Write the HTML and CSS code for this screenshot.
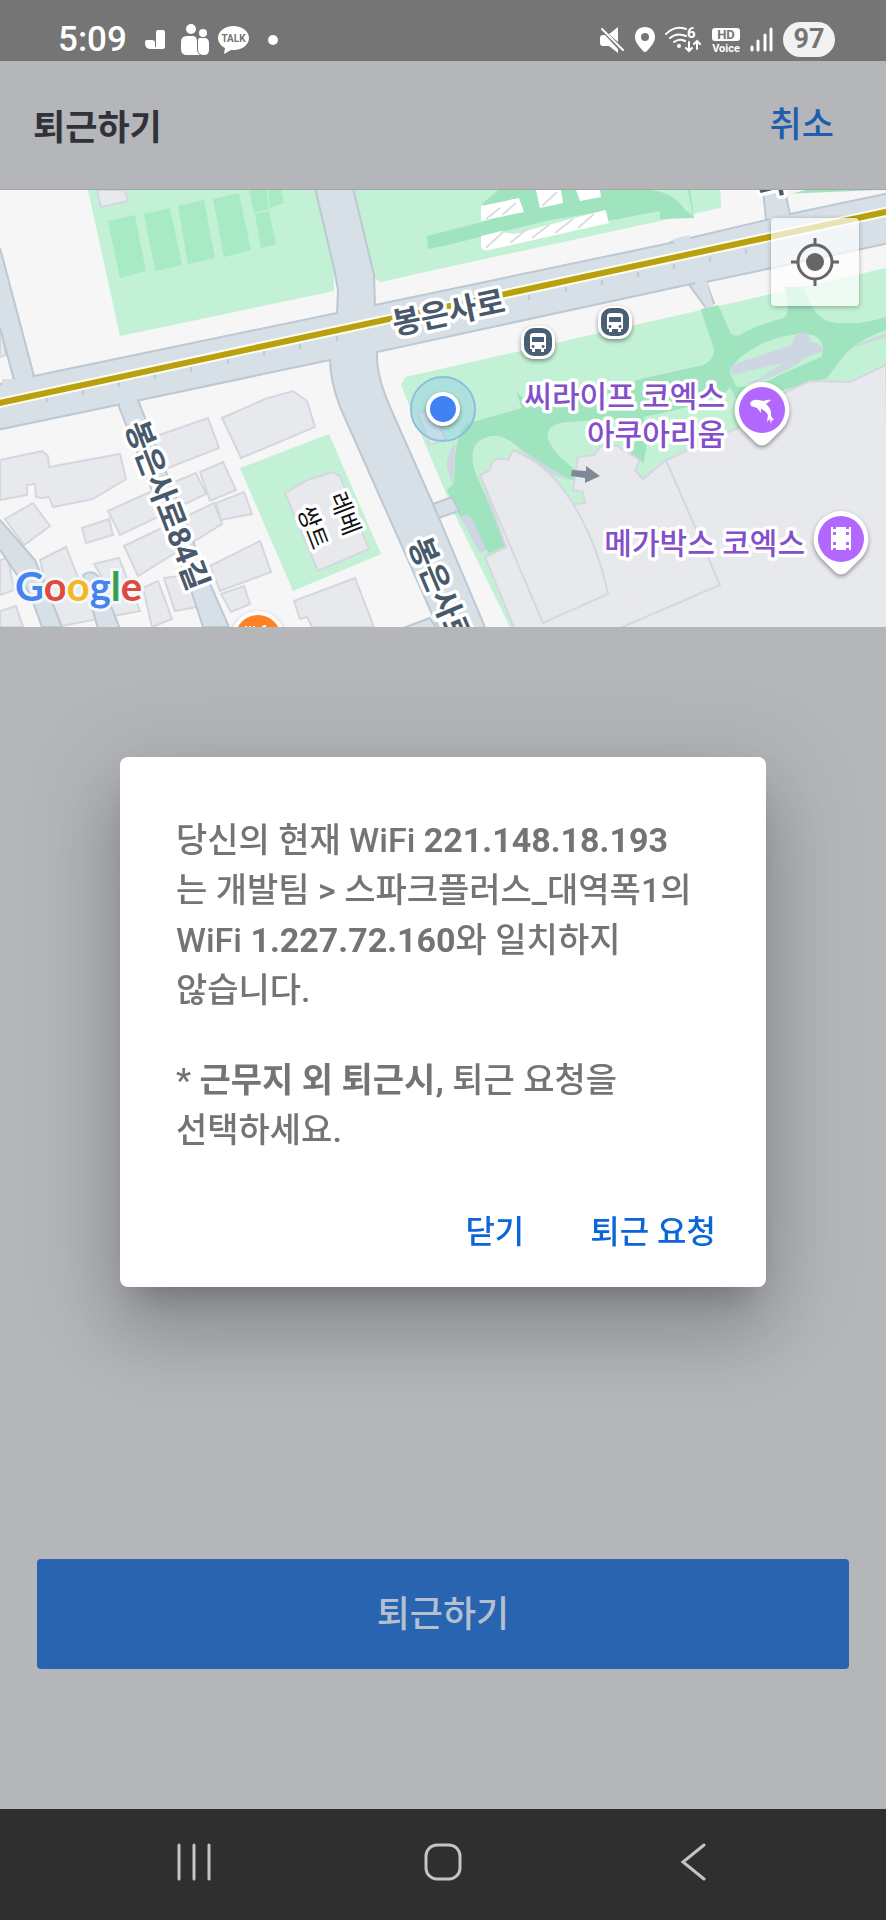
FILE: index.html
```html
<!DOCTYPE html>
<html lang="ko">
<head>
    <meta charset="UTF-8">
    <meta name="viewport" content="width=device-width, initial-scale=1.0">
    <title>퇴근하기</title>
    <link rel="stylesheet" href="styles.css">
</head>
<body>

<div class="app">

    <!-- status bar -->
    <div class="status">
        <div class="status-left">
            <span class="clock">5:09</span>
            <svg class="ic-j" width="20" height="20" viewBox="0 0 20 20"><path d="M11 2q0-2 2-2h5q2 0 2 2v15q0 2-2 2H6Q0 19 0 13v-1q0-2 2-2h5q3 0 3 3v4h1z"/></svg>
            <svg class="ic-people" width="28" height="32" viewBox="0 0 28 32"><circle cx="10" cy="5" r="5"/><circle cx="22" cy="9" r="4"/><path d="M6 12h6q4 0 4 6v7q0 4 3 6H6q-6 0-6-6v-7q0-6 6-6zM18 14h5q5 0 5 5v7q0 5-5 5-6 0-6-5v-9q0-2 1-3z"/></svg>
            <svg class="ic-talk" width="31" height="30" viewBox="0 0 31 30"><path d="M15.500 1C7 1 0 6 0 13c0 4 3 8 7 10l-1 6 7-4h3c8 0 15-5 15-12S24 1 15.500 1z"/><text x="15.500" y="17" text-anchor="middle">TALK</text></svg>
            <svg class="ic-dot" width="10" height="10" viewBox="0 0 10 10"><circle cx="5" cy="5" r="5"/></svg>
        </div>
        <div class="status-right">
            <svg width="25" height="26" viewBox="0 0 25 26"><path d="M8 8l10-8v15L10 8zM0 11q0-3 3-3h2l13 14v4l-9-7H3q-3 0-3-3z"/><path d="M2 2l21 21" class="w-line"/></svg>
            <svg width="20" height="25" viewBox="0 0 20 25"><path fill-rule="evenodd" d="M10 0C4 0 0 4 0 10c0 6 5 10 8 14q2 2 4 0c3-4 8-8 8-14C20 4 16 0 10 0zm0 6a4 4 0 1 1 0 8 4 4 0 0 1 0-8z"/></svg>
            <svg width="37" height="27" viewBox="0 0 37 27"><g class="w-line"><path d="M1 8Q10-1 21 3M5 12Q12 6 21 10M9 16q5-4 11-1M24 16v9M21 22l3 3 3-3M32 23v-8M29 18l3-3 3 3"/></g><circle cx="14" cy="20" r="2"/><text x="22" y="12" class="six">6</text></svg>
            <svg width="28" height="26" viewBox="0 0 28 26"><rect y="1" width="28" height="13" rx="3"/><text x="14" y="12" text-anchor="middle" class="hd">HD</text><text x="14" y="25" text-anchor="middle" class="voice">Voice</text></svg>
            <svg width="23" height="25" viewBox="0 0 23 25"><path class="w-bar" d="M2 20v3M8 14v9M15 8v15M21 2v21"/></svg>
            <span class="battery">97</span>
        </div>
    </div>

    <header class="header">
        <h1 class="title">퇴근하기</h1>
        <a href="#" class="cancel">취소</a>
    </header>

    <!-- map -->
    <section class="map">
        <svg class="map-svg" viewBox="0 190 886 437" preserveAspectRatio="xMinYMin slice">
            <rect y="190" width="886" height="437" fill="#f6f6f6"/>

            <!-- parks -->
            <g fill="#c3f1d5">
                <path d="M88 190L120 336 334 291V268L315 190zM354 190L374 278 381 282 443 268 720 208 758 200V190zM240 468L329 434 381 554 293 591z"/>
                <path d="M405 377L886 268V420L640 627H510L455 515 423 439 401 385z"/>
            </g>
            <g fill="#a7eac3">
                <path d="M108 221l27-6 11 56-26 7zM144 214l26-6 12 57-27 6zM178 206l26-6 11 58-27 6zM213 199l26-6 12 57-27 7zM249 190h17l3 19-15 4zM268 190h13l3 13-14 5zM255 214l14-3 7 33-15 4z"/>
            </g>
            <path fill="#9fe4be" d="M427 236L490 220 482 204 498 190H880L758 195 721 209 720 190H690L694 218 660 219 608 221 607 211 550 220 443 246 428 249z"/>
            <path fill="#f6f6f6" d="M721 209L790 194 886 170V190H720z"/>
            <path fill="#c3f1d5" d="M652 190Q676 194 685 210L693 216 688 190zM608 221L660 211V219L608 232z"/>
            <g fill="#fff">
                <path d="M481 206l38-8 5 14-43 9zM536 190h25l2 13-23 5zM576 190h24l1 7-21 4zM481 236l20-5q12 6 28-1l76-20 4 13-120 27q-8 2-8-5z"/>
            </g>
            <path d="M486 219l14-11M502 215l14-12M542 206l15-14M486 248l18-17M510 243l17-14M532 238l18-14M555 233l18-14M578 228l16-14" stroke="#dcdde1" stroke-width="2"/>

            <!-- park paths, drawn on a 3x grid -->
            <g transform="translate(430 250) scale(0.3333)">
                <path fill="#9fe4be" d="M812 178L850 290Q860 325 820 345L640 385Q520 425 400 450L290 455 260 425 275 475Q180 500 110 522 75 560 75 640L72 700 50 720 90 800Q130 830 178 912L230 885 150 700Q110 620 140 580 190 535 250 580L380 675 430 690 437 660Q370 610 355 570 340 520 420 515L610 505Q635 550 600 610L640 640Q660 560 640 500 780 475 860 440L920 470 1060 420 1190 385 1240 320Q1280 270 1368 240V200Q1280 230 1200 215 1150 205 1120 110H1065Q1085 190 1060 205 980 225 930 255 905 260 900 245L865 165z"/>
                <path fill="#c3f1d5" d="M900 370Q905 330 980 290 1060 245 1150 255 1190 275 1175 320L1060 370Q980 415 920 410zM780 480Q860 470 900 410L930 470 900 540H780z"/>
                <path fill="#ced6e3" d="M905 345L1085 285 1098 250H1136L1140 275Q1182 280 1178 305L1128 322Q1060 380 940 405L990 385Q1040 345 1080 335L905 375zM1275 285L1368 250V262L1270 292zM75 580Q50 610 50 650L68 708Q75 640 75 580zM90 800Q112 785 128 810L170 900 150 910zM250 585L380 665 425 690 370 675z"/>
            </g>

            <!-- COEX building -->
            <path class="bld" d="M886 365L850 382 810 381 786 392 740 427 666 460 643 479 635 470 640 460 616 445 600 447 594 455 578 457 573 490 583 492 585 503 573 504Q550 465 513 450L508 460Q492 455 490 470L480 475 506 547 485 557 515 630H890z"/>
            <path class="bld" d="M480 475L543 623 608 594Q598 545 573 504M666 460L720 585 620 628M506 547L485 557"/>
            <path class="bld" d="M418 413l12-5 16 31-16 6z"/>

            <!-- buildings, west side -->
            <g class="bld">
                <path d="M0 331v26l6-2-4-22zM97 190l4 17 27-6-3-11zM0 460L42 451 48 456 49 467 120 454 126 479 93 499 53 507 49 497 41 498 36 497 35 484 27 485 27 495 0 500zM5 519L33 503 50 526 24 545z"/>
                <path d="M145 440L208 418 219 448 158 472zM222 418L265 399 293 391 307 401 315 427 241 458zM108 511L150 492 196 473 206 494 120 535zM200 472L223 462 236 490 210 501zM82 528L109 519 113 535 86 543zM124 546L214 503 222 524 138 576zM216 503L244 492 252 514 221 520zM210 566L260 541 271 572 220 591z"/>
                <path d="M40 560L66 547 79 580 106 584 94 564 119 558 140 611 56 627zM143 588L158 581 172 619 152 627zM164 578L188 575 197 607 175 611zM0 560L8 558 14 590 0 595zM0 611L16 606 23 627H0zM221 594L244 586 250 604 231 612zM294 601L355 578 374 627H312L307 617 300 619z"/>
                <path d="M285 493L308 480 332 472 340 476 369 549 318 571z"/>
            </g>

            <!-- roads -->
            <g class="road">
                <path d="M0 248L34 376 14 380 0 328M0 520L35 560 48 592 62 627H42L30 594 0 550"/>
                <path d="M117 402L190 587 203 627H229L207 577 138 400z"/>
                <path d="M671 242L682 275 706 308 714 303 690 238z"/>
                <path d="M766 220L763 190H785L790 215z"/>
                <path d="M83 575q12-8 19 8l18 46h-22z"/>
                <path d="M433 504L452 497 459 511 436 519zM403 628L430 618 436 628z"/>
                <path d="M-3 385L14 380 34 376 337 313 338 290 334 268 315 188H353L374 275 375 305 675 242 690 238 766 220 790 214 890 193V243L706 282 691 284 377 352Q376 375 390 407L433 504 487 632H440L340 407Q330 380 330 360L136 401 117 405-3 430z"/>
            </g>
            <path fill="#d7dfe7" d="M2 379h12l18-4 4 14-34 8zM119 396h18v12h-16zM673 239l16-4 3 9-17 4zM693 278l12-3 8 30-7 3zM768 213l20-4 2 10-20 4z"/>
            <path d="M47 402v-5M83 395v-5M119 387v-5M155 379v-5M191 372v-5M228 364v-5M264 356v-5M300 349v-5M337 341v-5M529 300v-5M566 292v-5M602 285v-5M638 277v-5M674 269v-5M710 262v-5M746 254v-5" stroke="#c0cbd5" stroke-width="2"/>
            <path d="M-5 404L890 211" stroke="#fffef2" stroke-width="10"/>
            <path d="M-5 404L890 211" stroke="#b8a00e" stroke-width="6"/>

            <!-- labels -->
            <g class="lbl road-lbl">
                <text transform="translate(395 335) rotate(-12)">봉은사로</text>
                <text transform="translate(125 426) rotate(69)">봉은사로84길</text>
                <text transform="translate(408 543) rotate(67)">봉은사로</text>
                <text transform="translate(760 197) rotate(-12)">파</text>
            </g>
            <g class="lbl bld-lbl">
                <text transform="translate(329 496) rotate(69)">레베</text>
                <text transform="translate(297 510) rotate(69)">쌍트</text>
            </g>
            <g class="lbl poi-lbl">
                <text x="725" y="407">씨라이프 코엑스</text>
                <text x="725" y="445">아쿠아리움</text>
                <text x="805" y="554">메가박스 코엑스</text>
            </g>
            <path d="M572 470l14 1v-5l14 10-15 7v-5l-14-2z" fill="#7f8995"/>

            <!-- bus stops -->
            <g class="pin">
                <g transform="translate(538 342)">
                    <rect x="-17" y="-16" width="34" height="33" rx="13" fill="#fff"/><rect x="-14" y="-14" width="28" height="28" rx="10" fill="#4a5f73"/>
                    <path fill="#fff" fill-rule="evenodd" d="M-8-6q0-3 4-3h8q4 0 4 3V7H6v3H3V7h-6v3h-3V7h-2zM-6-5V0H6v-5zM-5 3a1.500 1.500 0 1 0 .1 0zM5 3a1.500 1.500 0 1 0 .1 0z"/>
                </g>
                <g transform="translate(615 322)">
                    <rect x="-17" y="-16" width="34" height="33" rx="13" fill="#fff"/><rect x="-14" y="-14" width="28" height="28" rx="10" fill="#4a5f73"/>
                    <path fill="#fff" fill-rule="evenodd" d="M-8-6q0-3 4-3h8q4 0 4 3V7H6v3H3V7h-6v3h-3V7h-2zM-6-5V0H6v-5zM-5 3a1.500 1.500 0 1 0 .1 0zM5 3a1.500 1.500 0 1 0 .1 0z"/>
                </g>
            </g>

            <!-- place pins -->
            <g class="pin" transform="translate(762 410)">
                <path fill="#fff" d="M0-28A28 28 0 0 1 20 19L6 33Q0 38-6 33L-20 19A28 28 0 0 1 0-28z"/>
                <circle r="23" fill="#b267ff"/>
                <path fill="#fff" d="M-12-7Q-9-11-4-10L2-9Q5-11 9-10L4-6Q10-1 9 6L12 10 10 10 9 14 8 9 5 12 6 5Q3 0-1-1L-1 3-5-2-11-4z"/>
            </g>
            <g class="pin" transform="translate(841 539)">
                <path fill="#fff" d="M0-28A28 28 0 0 1 20 19L6 33Q0 38-6 33L-20 19A28 28 0 0 1 0-28z"/>
                <circle r="23" fill="#b267ff"/>
                <path fill="#fff" fill-rule="evenodd" d="M-10-12h2v2h3v-2H5v2h3v-2h2v23H8V9H5v2H-5V9h-3v2h-2zM-8-7v3h3v-3zM5-7v3h3v-3zM-8 3v3h3V3zM5 3v3h3V3z"/>
            </g>
            <g class="pin" transform="translate(258 638)">
                <circle r="27" fill="#fff"/><circle r="23" fill="#ff8126"/>
                <path d="M-12-12v8M-8-12v8M-4-12v8M4-8q0-4 4-4" stroke="#fff" stroke-width="2" fill="none"/>
            </g>

            <!-- current position -->
            <circle cx="443" cy="409" r="32" fill="#8fcbe9" fill-opacity="0.4" stroke="#8bbfda" stroke-width="2"/>
            <circle cx="443" cy="409" r="17" fill="#fff" class="pin"/>
            <circle cx="443" cy="409" r="13" fill="#4082f4"/>

            <text x="15" y="601" class="google"><tspan fill="#4483f0">G</tspan><tspan fill="#dd4a3e">o</tspan><tspan fill="#f3b81c">o</tspan><tspan fill="#4483f0">g</tspan><tspan fill="#35a055">l</tspan><tspan fill="#dd4a3e">e</tspan></text>
        </svg>
        <button type="button" class="locate" aria-label="현재 위치">
            <svg width="50" height="50" viewBox="0 0 50 50"><circle cx="25" cy="25" r="17" fill="none" stroke="#666" stroke-width="3"/><circle cx="25" cy="25" r="9" fill="#666"/><path d="M25 1v7M25 42v7M1 25h7M42 25h7" stroke="#666" stroke-width="3"/></svg>
        </button>
    </section>

    <main class="content">
        <button type="button" class="submit">퇴근하기</button>
    </main>

    <nav class="navbar">
        <button type="button" aria-label="최근 앱"><svg width="38" height="38" viewBox="0 0 38 38"><path d="M4 2v34M19 2v34M34 2v34"/></svg></button>
        <button type="button" aria-label="홈"><svg width="38" height="38" viewBox="0 0 38 38"><rect x="2" y="2" width="34" height="34" rx="11"/></svg></button>
        <button type="button" aria-label="뒤로"><svg width="38" height="38" viewBox="0 0 38 38"><path d="M31 2L10 19l21 17"/></svg></button>
    </nav>
</div>

<!-- alert dialog -->
<div class="dialog-layer">
    <div class="dialog" role="dialog" aria-modal="true">
        <p>당신의 현재 WiFi <b>221.148.18.193</b><br>는 개발팀 &gt; 스파크플러스_대역폭1의 WiFi <b>1.227.72.160</b>와 일치하지 않습니다.</p>
        <p>* <b>근무지 외 퇴근시,</b> 퇴근 요청을 선택하세요.</p>
        <div class="dialog-actions">
            <button type="button">닫기</button>
            <button type="button">퇴근 요청</button>
        </div>
    </div>
</div>

</body>
</html>
```
FILE: styles.css
```css
* {
    box-sizing: border-box;
}

body {
    margin: 0;
    background: #b4b6ba;
    font-family: Roboto, "Noto Sans CJK KR", sans-serif;
}

button {
    padding: 0;
    border: 0;
    background: none;
    font-family: inherit;
    cursor: pointer;
}

svg {
    display: block;
}

.app {
    display: flex;
    flex-direction: column;
    min-height: 100vh;
}

/* status bar */
.status {
    display: flex;
    justify-content: space-between;
    height: 61px;
    padding: 18px 51px 0 58px;
    background: #757575;
    color: #fff;
    fill: #fff;
}

.status-left,
.status-right {
    display: flex;
    align-items: center;
    height: 43px;
}

.status-right {
    gap: 10px;
}

.clock {
    margin-right: 18px;
    font-size: 35px;
    font-weight: 500;
}

.ic-j {
    margin-right: 16px;
}

.ic-people {
    margin-right: 9px;
}

.ic-talk {
    margin-right: 19px;
}

.ic-talk text {
    fill: #757575;
    font-size: 10px;
    font-weight: 700;
}

.w-line,
.w-bar {
    fill: none;
    stroke: #fff;
    stroke-width: 2;
    stroke-linecap: round;
}

.w-bar {
    stroke-width: 3;
}

.six {
    font-size: 15px;
    font-weight: 700;
}

.hd {
    fill: #757575;
    font-size: 13px;
    font-weight: 700;
}

.voice {
    font-size: 11px;
    font-weight: 700;
}

.battery {
    width: 52px;
    height: 35px;
    border-radius: 18px;
    background: #f2f2f2;
    color: #757575;
    font-size: 27px;
    font-weight: 700;
    line-height: 35px;
    text-align: center;
}

/* header */
.header {
    display: flex;
    align-items: center;
    justify-content: space-between;
    height: 129px;
    padding: 0 52px 2px 33px;
    border-bottom: 1px solid #a3a5a9;
}

.title {
    margin: 0;
    color: #303238;
    font-size: 35px;
    font-weight: 700;
}

.cancel {
    padding-bottom: 6px;
    color: #205ead;
    font-size: 35px;
    font-weight: 500;
    text-decoration: none;
}

/* map */
.map {
    position: relative;
    height: 437px;
    overflow: hidden;
}

.map-svg {
    width: 100%;
    height: 100%;
}

.road {
    fill: #d7dfe7;
    stroke: #bcc8d2;
    stroke-width: 2;
}

.bld {
    fill: #e8e9ed;
    stroke: #d5d7e0;
    stroke-width: 2;
}

.lbl text {
    paint-order: stroke;
    stroke: #fff;
    stroke-width: 7px;
    stroke-linejoin: round;
}

.road-lbl text {
    fill: #48596b;
    font-size: 31px;
    font-weight: 700;
}

.bld-lbl text {
    fill: #111;
    font-size: 24px;
}

.poi-lbl text {
    fill: #8350c9;
    font-size: 30px;
    font-weight: 500;
    text-anchor: end;
}

.google {
    paint-order: stroke;
    stroke: #f4f7fa;
    stroke-width: 6px;
    font-family: Lato, sans-serif;
    font-size: 40px;
    font-weight: 700;
}

.pin {
    filter: drop-shadow(0 2px 2px rgba(0, 0, 0, 0.4));
}

.locate {
    position: absolute;
    top: 28px;
    right: 27px;
    display: flex;
    align-items: center;
    justify-content: center;
    width: 88px;
    height: 88px;
    border-radius: 4px;
    background: rgba(255, 255, 255, 0.7);
    box-shadow: 0 1px 5px rgba(0, 0, 0, 0.3);
}

/* content */
.content {
    display: flex;
    flex: 1;
    flex-direction: column;
    justify-content: flex-end;
    padding: 0 37px 140px;
}

.submit {
    height: 110px;
    padding-bottom: 6px;
    border-radius: 4px;
    background: #2864b0;
    color: #b4bfd0;
    font-size: 36px;
    font-weight: 500;
}

.navbar {
    display: flex;
    align-items: center;
    justify-content: space-around;
    height: 111px;
    padding: 0 70px 6px;
    background: #2f2f2f;
}

.navbar svg {
    fill: none;
    stroke: #c4c4c4;
    stroke-width: 3;
    stroke-linecap: round;
}

/* dialog */
.dialog-layer {
    position: fixed;
    inset: 0;
    display: flex;
    align-items: center;
    justify-content: center;
    padding: 124px 120px 0;
}

.dialog {
    width: 100%;
    padding: 58px 50px 25px 56px;
    border-radius: 8px;
    background: #fff;
    box-shadow: 0 22px 30px -14px rgba(0, 0, 0, 0.2), 0 48px 76px 6px rgba(0, 0, 0, 0.14), 0 18px 92px 16px rgba(0, 0, 0, 0.12);
}

.dialog p {
    margin: 0 0 40px;
    color: #747474;
    font-size: 34px;
    font-weight: 500;
    line-height: 50px;
    word-break: keep-all;
}

.dialog-actions {
    display: flex;
    justify-content: flex-end;
    gap: 66px;
}

.dialog-actions button {
    height: 67px;
    color: #0b66d8;
    font-size: 32px;
    font-weight: 500;
}
```
